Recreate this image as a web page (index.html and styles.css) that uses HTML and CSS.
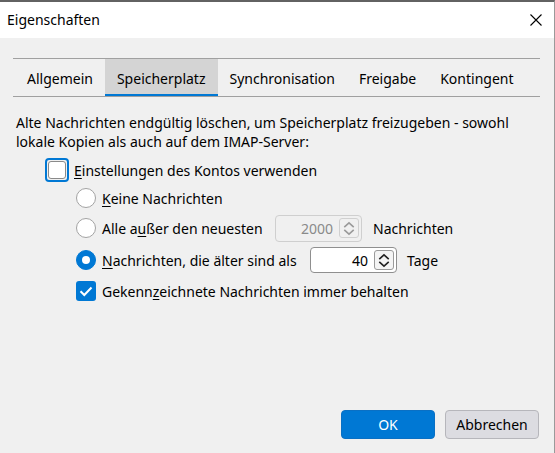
FILE: index.html
```html
<!DOCTYPE html>
<html lang="de">
<head>
<meta charset="utf-8">
<title>Eigenschaften</title>
<link rel="stylesheet" href="styles.css">
</head>
<body>
<div class="window">
  <div class="titlebar">
    <span class="title">Eigenschaften</span>
    <svg class="close" width="12" height="12" viewBox="0 0 12 12"><path d="M0.5 0.5 L11.5 11.5 M11.5 0.5 L0.5 11.5" stroke="#000" stroke-width="1.1" fill="none"/></svg>
  </div>
  <div class="content">
    <div class="tabs">
      <div class="tab">Allgemein</div>
      <div class="tab active">Speicherplatz</div>
      <div class="tab">Synchronisation</div>
      <div class="tab">Freigabe</div>
      <div class="tab">Kontingent</div>
    </div>
    <p class="desc">Alte Nachrichten endgültig löschen, um Speicherplatz freizugeben - sowohl<br>lokale Kopien als auch auf dem IMAP-Server:</p>
    <div class="options">
      <div class="row row-main">
        <span class="focusring"><span class="box"></span></span>
        <span class="label-main"><u>E</u>instellungen des Kontos verwenden</span>
      </div>
      <div class="row sub r2">
        <span class="radio"></span>
        <span class="label"><u>K</u>eine Nachrichten</span>
      </div>
      <div class="row sub r3">
        <span class="radio"></span>
        <span class="label lbl-keep">Alle a<u>u</u>ßer den neuesten</span>
        <span class="spin disabled"><span class="val">2000</span><span class="arrows"><svg width="19" height="19" viewBox="0 0 19 19"><path d="M4.5 8 L9.5 3.5 L14.5 8 M4.5 11 L9.5 15.5 L14.5 11" fill="none" stroke="currentColor" stroke-width="1.7"/></svg></span></span>
        <span class="after">Nachrichten</span>
      </div>
      <div class="row sub r4">
        <span class="radio checked"></span>
        <span class="label lbl-age"><u>N</u>achrichten, die älter sind als</span>
        <span class="spin"><span class="val">40</span><span class="arrows"><svg width="19" height="19" viewBox="0 0 19 19"><path d="M4.5 8 L9.5 3.5 L14.5 8 M4.5 11 L9.5 15.5 L14.5 11" fill="none" stroke="currentColor" stroke-width="1.7"/></svg></span></span>
        <span class="after">Tage</span>
      </div>
      <div class="row sub r5">
        <span class="checkbox checked"><svg width="20" height="20" viewBox="0 0 20 20"><path d="M4.5 10.2 L8.3 14 L15.5 6.5" fill="none" stroke="#fff" stroke-width="2"/></svg></span>
        <span class="label">Gekenn<u>z</u>eichnete Nachrichten immer behalten</span>
      </div>
    </div>
  </div>
  <div class="footer">
    <button class="btn primary">OK</button>
    <button class="btn">Abbrechen</button>
  </div>
</div>
</body>
</html>
```
FILE: styles.css
```css
* { box-sizing: border-box; }
html, body { margin: 0; padding: 0; }
body {
  width: 555px;
  height: 453px;
  overflow: hidden;
  font-family: "Noto Sans", "Open Sans", sans-serif;
  font-size: 14px;
  color: #000;
  background: #f0f0f0;
}
.window {
  height: 453px;
  display: flex;
  flex-direction: column;
  border-top: 2px solid #626262;
  border-right: 1px solid #9a9a9a;
}
.titlebar {
  height: 36px;
  background: #fff;
  display: flex;
  align-items: center;
  justify-content: space-between;
  padding: 0 12px 0 7px;
}
.title { font-size: 14px; line-height: 20px; }
.close { display: block; margin-top: -1px; }
.content { flex: 1; }
.tabs {
  margin: 20px 14px 0 13px;
  padding-left: 2px;
  border-top: 1px solid #a0a0a0;
  border-bottom: 1px solid #a0a0a0;
  display: flex;
  height: 39px;
}
.tab {
  height: 37px;
  padding: 2px 12px 0;
  line-height: 35px;
  white-space: nowrap;
}
.tab.active {
  background: #d4d4d4;
  box-shadow: inset 0 -2px 0 #0078d4;
}
.desc {
  margin: 16px 0 0 16px;
  line-height: 19px;
}
.options { margin-top: 5px; }
.row {
  display: flex;
  align-items: center;
  white-space: nowrap;
}
.row-main { height: 28px; padding-left: 45px; }
.sub { padding-left: 76px; }
.r2 { height: 28px; }
.r3 { height: 32px; }
.r4 { height: 32px; }
.r5 { height: 30px; }
.focusring {
  width: 24px;
  height: 24px;
  border: 2px solid #0078d4;
  border-radius: 4px;
  padding: 1px;
  margin-right: 5px;
}
.focusring .box {
  display: block;
  width: 18px;
  height: 18px;
  background: #fff;
  border: 1px solid #8a8a8a;
  border-radius: 3px;
}
.radio {
  width: 20px;
  height: 20px;
  border-radius: 50%;
  border: 1px solid #a3a3a3;
  background: #fff;
  margin-right: 6px;
  flex: none;
  display: flex;
  align-items: center;
  justify-content: center;
}
.radio.checked {
  background: #0078d4;
  border-color: #0078d4;
}
.radio.checked::after {
  content: "";
  width: 8px;
  height: 8px;
  border-radius: 50%;
  background: #fff;
}
.checkbox {
  width: 20px;
  height: 20px;
  border-radius: 3px;
  background: #0078d4;
  margin-right: 6px;
  flex: none;
}
.checkbox svg { display: block; }
.lbl-keep { width: 173px; }
.lbl-age { width: 208px; }
.spin {
  width: 87px;
  height: 27px;
  border: 1px solid #8f8f8f;
  border-radius: 4px;
  background: #fff;
  display: flex;
  align-items: center;
  justify-content: flex-end;
  padding-right: 2px;
  flex: none;
}
.spin .val { margin-right: 6px; }
.spin .arrows {
  width: 20px;
  height: 20px;
  border: 1px solid #9a9a9a;
  border-radius: 3px;
  background: #f4f4f4;
  color: #222;
  display: flex;
  align-items: center;
  justify-content: center;
}
.spin .arrows svg { display: block; }
.spin.disabled {
  background: #f0f0f0;
  border-color: #cfcfcf;
  color: #8a8a8a;
}
.spin.disabled .arrows {
  border-color: #d0d0d0;
  color: #9a9a9a;
  background: #f0f0f0;
}
.r4 .spin { height: 26px; }
.r3 .after { margin-left: 11px; }
.r4 .after { margin-left: 10px; }
u { text-underline-offset: 2px; text-decoration-thickness: 1px; }
.footer {
  display: flex;
  justify-content: flex-end;
  gap: 10px;
  padding: 0 15px 14px 0;
}
.btn {
  width: 94px;
  height: 29px;
  border-radius: 4px;
  font-family: inherit;
  font-size: 14px;
  color: #000;
  background: #dcdce1;
  border: 1px solid #b6b6bb;
  padding: 0;
}
.btn.primary {
  background: #0078d4;
  border-color: #0a70c4;
  color: #fff;
}
```
